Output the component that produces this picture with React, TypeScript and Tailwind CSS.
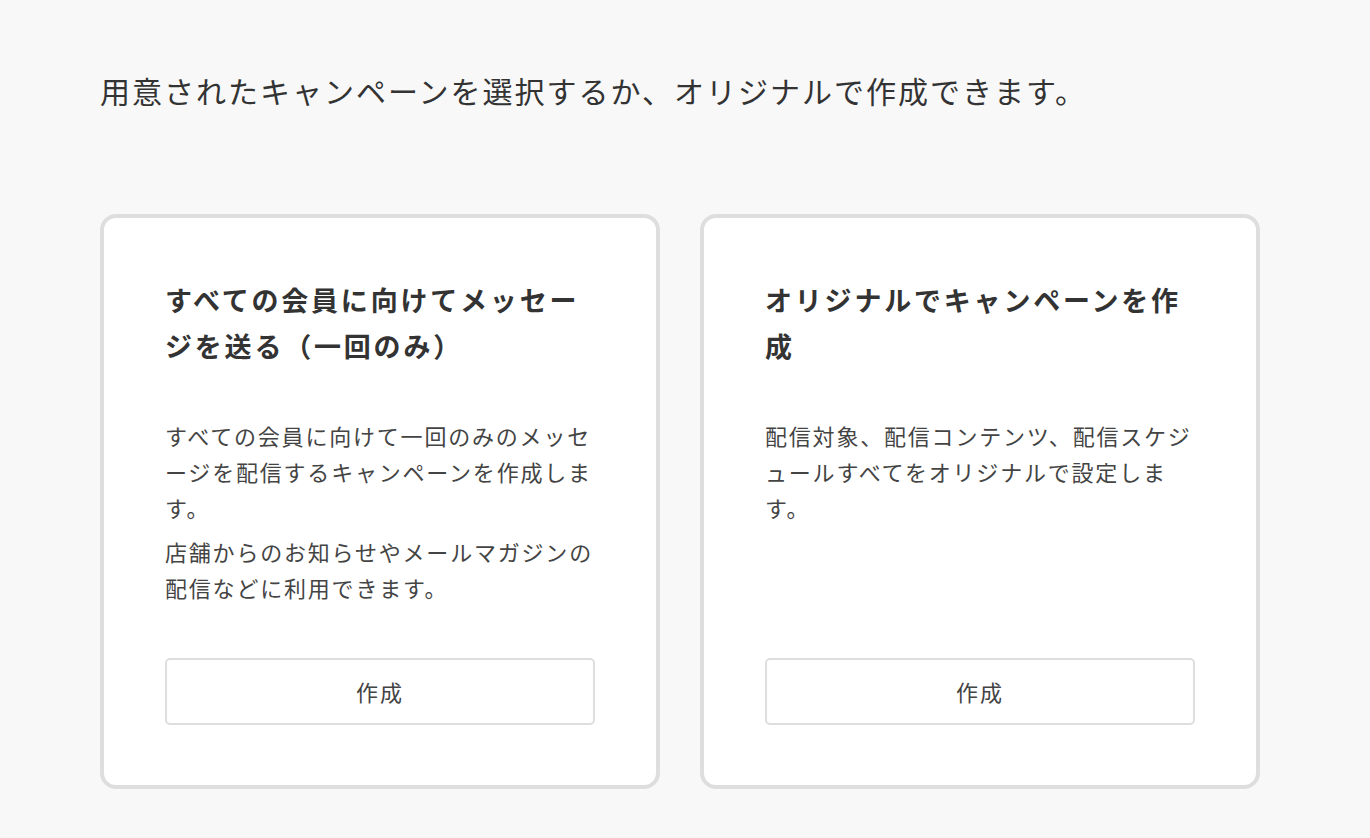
const FONT = { fontFamily: '"Noto Sans CJK JP", "Noto Sans", sans-serif' };

const CAMPAIGNS = [
  {
    title: "すべての会員に向けてメッセージを送る（一回のみ）",
    body: [
      "すべての会員に向けて一回のみのメッセージを配信するキャンペーンを作成します。",
      "店舗からのお知らせやメールマガジンの配信などに利用できます。",
    ],
  },
  {
    title: "オリジナルでキャンペーンを作成",
    body: ["配信対象、配信コンテンツ、配信スケジュールすべてをオリジナルで設定します。"],
  },
];

function CampaignCard({ title, body }: { title: string; body: string[] }) {
  return (
    <div className="flex flex-1 flex-col rounded-[16px] border-4 border-[#dedede] bg-white px-[61px] pt-[59px] pb-[60px]">
      <h2 className="text-[27px] font-bold leading-[46px] tracking-[2.8px] text-[#333]">{title}</h2>
      <div className="mt-[48px] flex flex-col gap-[8px]">
        {body.map((p) => (
          <p key={p} className="text-[22px] leading-[36px] tracking-[1.8px] text-[#444]">
            {p}
          </p>
        ))}
      </div>
      <button
        type="button"
        className="mt-auto h-[67px] w-full rounded-[5px] border-2 border-[#dedede] bg-white text-[22px] tracking-[2px] text-[#444]"
      >
        作成
      </button>
    </div>
  );
}

export default function App() {
  return (
    <div style={FONT} className="min-h-[838px] w-full bg-[#f8f8f8] px-[100px] pt-[68px]">
      <p className="text-[30px] leading-[44px] tracking-[2px] text-[#333]">
        用意されたキャンペーンを選択するか、オリジナルで作成できます。
      </p>
      <div className="mt-[102px] grid w-[1160px] grid-cols-2 gap-[40px]">
        {CAMPAIGNS.map((c) => (
          <div key={c.title} className="flex min-h-[575px] flex-col">
            <CampaignCard title={c.title} body={c.body} />
          </div>
        ))}
      </div>
    </div>
  );
}
